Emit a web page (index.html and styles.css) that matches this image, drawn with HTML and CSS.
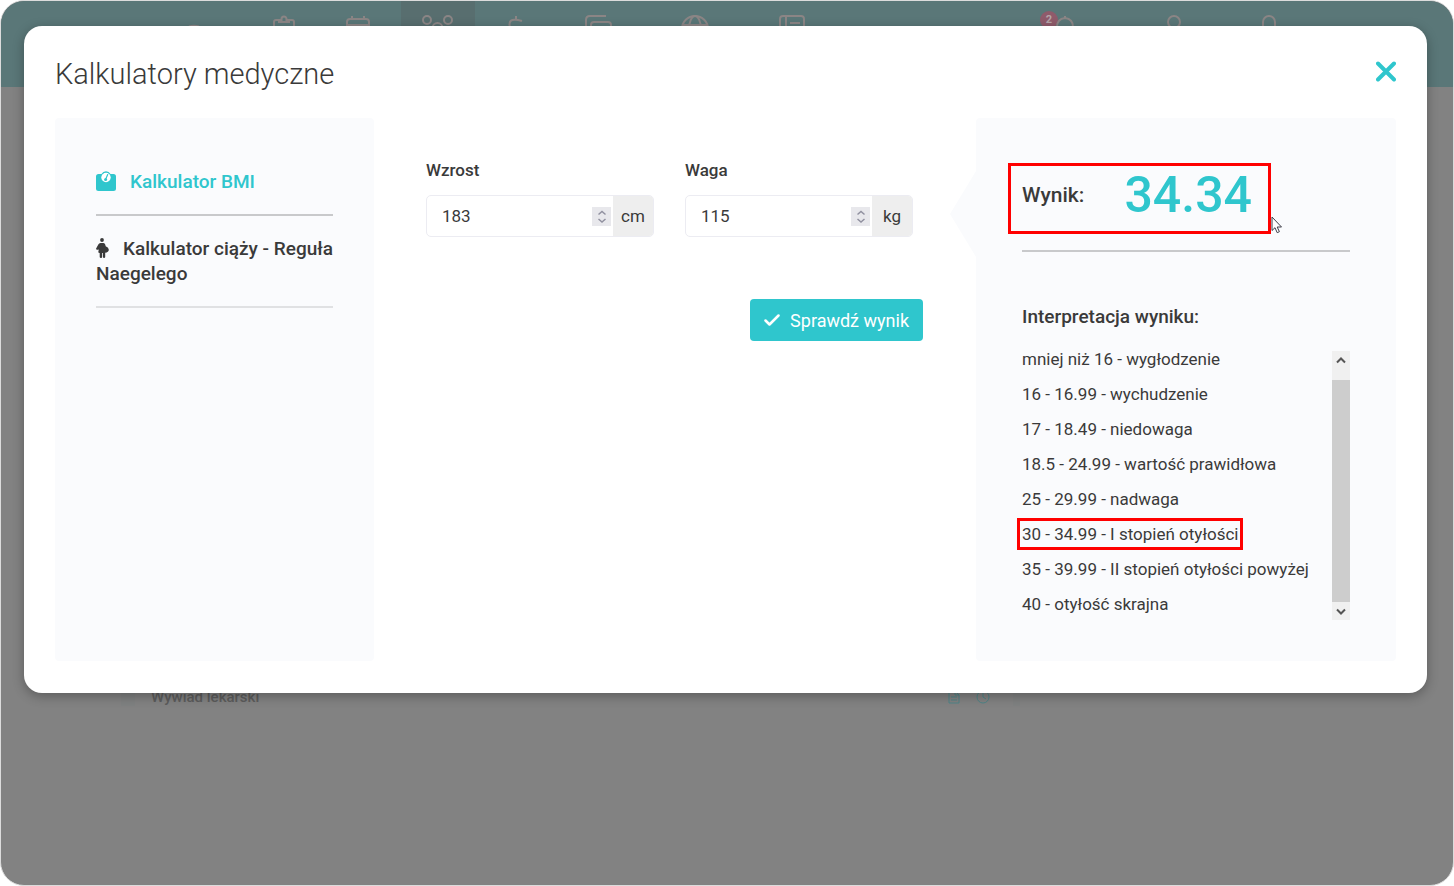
FILE: index.html
```html
<!DOCTYPE html>
<html lang="pl">
<head>
<meta charset="utf-8">
<title>Kalkulatory medyczne</title>
<link rel="stylesheet" href="styles.css">
</head>
<body>
<div class="stage">
  <div class="app">
    <header class="topbar">
      <nav class="topnav" aria-label="Menu główne">
        <a class="tab tab-home" href="#" aria-label="Start"><svg width="26" height="26" viewBox="0 0 26 26"><path d="M8 11.500Q13 10 18 11.500"/></svg></a>
        <a class="tab tab-s" href="#" aria-label="Karta"><svg width="26" height="26" viewBox="0 0 26 26"><path d="M7 5H5Q3 5 3 7v16h20V7q0-2-2-2h-2M8 7h10V5h-2.500V4a2.500 2.500 0 0 0-5 0v1H8z"/></svg></a>
        <a class="tab tab-s" href="#" aria-label="Kalendarz"><svg width="26" height="26" viewBox="0 0 26 26"><path d="M2 9V7q0-3 3-3h16q3 0 3 3v16H2zM2 10h22M7 1v3M19 1v3"/></svg></a>
        <a class="tab tab-s tab-active" href="#" aria-label="Pacjenci"><svg width="32" height="26" viewBox="0 0 32 26"><circle cx="5" cy="5" r="4"/><circle cx="26" cy="5" r="4"/><circle cx="15.500" cy="13" r="5"/></svg></a>
        <a class="tab tab-l" href="#" aria-label="Finanse"><svg width="26" height="26" viewBox="0 0 26 26"><path d="M13 1v4M19 6Q6 2 6.500 10q0 4 7 4"/></svg></a>
        <a class="tab tab-l" href="#" aria-label="Dokumenty"><svg width="28" height="26" viewBox="0 0 28 26"><path d="M2 20V5q0-4 4-4h16M7 22V10q0-3 3-3h14q3 0 3 3v12zM13 12h6"/></svg></a>
        <a class="tab tab-xl" href="#" aria-label="Portal"><svg width="28" height="28" viewBox="0 0 28 28"><circle cx="14" cy="14" r="13"/><ellipse cx="14" cy="14" rx="6" ry="13"/><path d="M2 10h24"/></svg></a>
        <a class="tab tab-l" href="#" aria-label="Raporty"><svg width="26" height="26" viewBox="0 0 26 26"><path d="M1 24V4q0-3 3-3h18q3 0 3 3v20zM7 1v23M11 8h10"/></svg></a>
      </nav>
      <nav class="topnav topnav-user" aria-label="Konto">
        <a class="tab tab-bell" href="#" aria-label="Powiadomienia"><svg width="26" height="26" viewBox="0 0 26 26"><path d="M5 20v-8q0-8 8-9 8 1 8 9v8M13 1v2"/></svg><span class="badge">2</span></a>
        <a class="tab tab-m" href="#" aria-label="Profil"><svg width="26" height="26" viewBox="0 0 26 26"><circle cx="13" cy="7" r="6"/></svg></a>
        <a class="tab tab-m" href="#" aria-label="Wyloguj"><svg width="26" height="26" viewBox="0 0 26 26"><path d="M7 11V7a6 6 0 0 1 12 0v4M4 12h18"/></svg></a>
      </nav>
    </header>
    <main class="record">
      <div class="record-row">
        <span class="record-name">Wywiad lekarski</span>
        <span class="record-tools">
          <svg width="12" height="14" viewBox="0 0 12 14"><path d="M1 1h6l4 4v8H1zM7 1v4h4M3 7h6M3 10h6"/></svg>
          <svg width="14" height="14" viewBox="0 0 14 14"><circle cx="7" cy="7" r="6"/><path d="M7 3v4l3 2"/></svg>
        </span>
      </div>
    </main>
  </div>

  <div class="overlay">
    <section class="dialog" role="dialog" aria-labelledby="dialog-title">
      <div class="dialog-head">
        <h1 id="dialog-title">Kalkulatory medyczne</h1>
        <button class="close" type="button" aria-label="Zamknij"><svg width="20" height="21" viewBox="0 0 20 21"><path d="M2 2.500l16 16M18 2.500l-16 16"/></svg></button>
      </div>
      <div class="columns">
        <nav class="calculators" aria-label="Kalkulatory">
          <a class="calc calc-active" href="#"><svg width="20" height="20" viewBox="0 0 20 20"><path fill="currentColor" d="M2.500 3h3a5 5 0 0 1 9 0h3Q20 3 20 5.500v12q0 2.500-2.500 2.500h-15Q0 20 0 17.500v-12Q0 3 2.500 3z"/><circle cx="10" cy="6.500" r="4.700" fill="#fff"/><path d="M9.600 8.500L11.700 3.500" stroke="currentColor" stroke-width="1.200" stroke-linecap="round"/><circle cx="9.600" cy="8.500" r="1.500" fill="currentColor"/></svg>Kalkulator BMI</a>
          <a class="calc" href="#"><svg width="13" height="20" viewBox="0 0 13 20"><g fill="currentColor"><circle cx="6" cy="2" r="1.900"/><path d="M4.500 5h3q1.400 0 1.700 1.500l.5 1.800Q13 9.500 12.800 12q-.2 2.300-3.600 2.800V19q0 1-1.200 1-1 0-1-1v-4h-.8v4q0 1-1.200 1-1.300 0-1.300-1v-4Q2.300 15 2.300 14l.5-2.400Q0 12.300 0 10.800L2.300 6.500Q3 5 4.500 5z"/></g></svg>Kalkulator ciąży - Reguła Naegelego</a>
        </nav>

        <form class="form">
          <div class="fields">
            <div class="field">
              <label for="height">Wzrost</label>
              <div class="control">
                <input id="height" type="number" value="183">
                <span class="spin"><svg width="10" height="13" viewBox="0 0 10 13"><path d="M1.500 4.500L5 1.500l3.500 3M1.500 9L5 12l3.500-3"/></svg></span>
                <span class="unit">cm</span>
              </div>
            </div>
            <div class="field">
              <label for="weight">Waga</label>
              <div class="control">
                <input id="weight" type="number" value="115">
                <span class="spin"><svg width="10" height="13" viewBox="0 0 10 13"><path d="M1.500 4.500L5 1.500l3.500 3M1.500 9L5 12l3.500-3"/></svg></span>
                <span class="unit">kg</span>
              </div>
            </div>
          </div>
          <button class="submit" type="button"><svg width="16" height="12" viewBox="0 0 16 12"><path d="M1.500 6.500L5.500 10.500 14.500 1.500"/></svg>Sprawdź wynik</button>
        </form>

        <section class="result">
          <div class="score">
            <span class="score-label">Wynik:</span>
            <strong class="score-value">34.34</strong>
            <svg class="pointer" width="12" height="18" viewBox="0 0 12 18"><path d="M1 1v13.500l3-2.800 2.200 5 2.200-1-2.200-4.700H10.500z"/></svg>
          </div>
          <hr class="rule">
          <h2>Interpretacja wyniku:</h2>
          <div class="scroller">
            <ul class="ranges">
              <li>mniej niż 16 - wygłodzenie</li>
              <li>16 - 16.99 - wychudzenie</li>
              <li>17 - 18.49 - niedowaga</li>
              <li>18.5 - 24.99 - wartość prawidłowa</li>
              <li>25 - 29.99 - nadwaga</li>
              <li><span class="match">30 - 34.99 - I stopień otyłości</span></li>
              <li>35 - 39.99 - II stopień otyłości powyżej</li>
              <li>40 - otyłość skrajna</li>
            </ul>
            <div class="bar">
              <button type="button" aria-label="Przewiń w górę"><svg width="10" height="7" viewBox="0 0 10 7"><path d="M1 5.500l4-4 4 4"/></svg></button>
              <span class="thumb"></span>
              <button type="button" aria-label="Przewiń w dół"><svg width="10" height="7" viewBox="0 0 10 7"><path d="M1 1.500l4 4 4-4"/></svg></button>
            </div>
          </div>
        </section>
      </div>
    </section>
  </div>
</div>
</body>
</html>
```
FILE: styles.css
```css
* { box-sizing: border-box; }

body {
  margin: 0;
  background: #fff;
  color: #3a3a3a;
  font-family: Roboto, "Open Sans", sans-serif;
  font-size: 17px;
}

a { color: inherit; text-decoration: none; }
button, input { font: inherit; color: inherit; }
svg { fill: none; flex: none; }

/* The dialog layer and the page share one grid cell. */
.stage { display: grid; min-height: 100vh; }
.app, .overlay { grid-area: 1 / 1; }

.app {
  border: 1px solid #dcdcdc;
  border-radius: 24px;
  background: #828282;
  overflow: hidden;
}

.topbar {
  display: flex;
  justify-content: space-between;
  height: 86px;
  background: #5a7778;
}
.topnav { display: flex; padding-left: 140px; }
.topnav-user { padding: 0 137px 0 0; }
.tab {
  display: flex;
  justify-content: center;
  padding-top: 14px;
  width: 82px;
}
.tab-home { width: 106px; }
.tab-s { width: 74px; }
.tab-m { width: 95px; }
.tab-xl { width: 112px; }
.tab-bell { width: 124px; }
.tab-active { margin-left: 6px; background: #586e6f; }
.tab svg { stroke: #8b8585; stroke-width: 2; }
.badge {
  order: -1;
  width: 18px;
  height: 18px;
  margin: -4px -6px 0 -10px;
  border-radius: 50%;
  background: #8f5b6b;
  color: #b5a5a9;
  font-size: 11px;
  font-weight: 700;
  line-height: 18px;
  text-align: center;
}

.record { padding: 601px 433px 0 120px; }
.record-row {
  display: flex;
  align-items: center;
  justify-content: space-between;
  height: 18px;
  padding: 0 23px 0 16px;
  border: solid #7f8181;
  border-width: 0 7px 0 14px;
}
.record-name { color: #5c5c5c; font-size: 15px; font-weight: 500; }
.record-tools { display: flex; gap: 16px; }
.record-tools svg { stroke: #4f8487; stroke-width: 1; }

.overlay { padding: 26px 27px 24px 24px; }
.dialog {
  padding: 28px 31px 32px;
  border-radius: 18px;
  background: #fff;
  box-shadow: 0 3px 12px rgba(0, 0, 0, .3);
}
.dialog-head {
  display: flex;
  justify-content: space-between;
  align-items: flex-start;
  margin-bottom: 24px;
}
h1 {
  margin: 0;
  font-size: 29px;
  font-weight: 300;
  line-height: 40px;
}
.close {
  display: flex;
  margin: 7px 0 0;
  padding: 0;
  border: 0;
  background: none;
}
.close svg { stroke: #2fc6cd; stroke-width: 4; stroke-linecap: round; }

.columns {
  display: grid;
  grid-template-columns: minmax(0, 319fr) minmax(0, 602fr) minmax(0, 420fr);
}

.calculators {
  padding: 31px 41px;
  border-radius: 4px;
  background: #fafbfd;
}
.calc {
  display: block;
  padding: 20px 0;
  border-bottom: 2px solid #e0e1e3;
  font-size: 19px;
  font-weight: 500;
  line-height: 25px;
}
.calc-active { border-color: #c8c9cb; color: #2fc6cd; }
.calc svg { margin-right: 14px; vertical-align: -3px; }

.form {
  display: flex;
  flex-direction: column;
  padding: 40px 53px 0 52px;
}
.fields {
  display: grid;
  grid-template-columns: repeat(2, minmax(0, 1fr));
  gap: 31px;
  padding-right: 10px;
}
.field label {
  display: block;
  margin-bottom: 13px;
  font-weight: 500;
  line-height: 24px;
}
.control {
  display: flex;
  align-items: center;
  height: 42px;
  border: 1px solid #ececf2;
  border-radius: 5px;
  overflow: hidden;
}
.control input {
  flex: 1;
  min-width: 0;
  height: 40px;
  padding: 0 0 0 15px;
  border: 0;
  background: none;
  outline: 0;
  appearance: textfield;
}
.control input::-webkit-inner-spin-button { appearance: none; }
.spin {
  display: flex;
  align-items: center;
  justify-content: center;
  width: 19px;
  height: 19px;
  margin: 1px 2px 0 0;
  background: #e8e8ec;
}
.spin svg { stroke: #9191a0; stroke-width: 1.500; }
.unit {
  width: 40px;
  background: #eee;
  line-height: 42px;
  text-align: center;
}

.submit {
  display: flex;
  align-items: center;
  align-self: flex-end;
  gap: 10px;
  height: 42px;
  margin-top: 62px;
  padding: 0 14px;
  border: 0;
  border-radius: 4px;
  background: #2fc6cd;
  color: #fff;
  font-size: 18px;
}
.submit svg { stroke: #fff; stroke-width: 2.500; stroke-linecap: round; stroke-linejoin: round; }

.result {
  position: relative;
  padding: 45px 46px 41px;
  border-radius: 4px;
  background: #fafbfd;
}
.result::before {
  content: "";
  position: absolute;
  top: 53px;
  right: 100%;
  width: 26px;
  height: 86px;
  background: #fafbfd;
  clip-path: polygon(100% 0, 100% 100%, 0 50%);
}
.score {
  position: relative;
  display: flex;
  align-items: center;
  justify-content: space-between;
  width: 263px;
  margin-left: -14px;
  padding: 0 16px 7px 11px;
  border: 3px solid #f00;
}
.score-label { font-size: 21px; font-weight: 500; }
.score-value {
  color: #2fc6cd;
  font-size: 50px;
  font-weight: 500;
  line-height: 58px;
}
.pointer { position: absolute; left: 260px; top: 50px; }
.pointer path { fill: #fff; stroke: #3f3f4a; stroke-width: 1; }
.rule {
  height: 2px;
  margin: 16px 0 52px;
  border: 0;
  background: #c8c9cb;
}
h2 {
  margin: 0 0 22px;
  font-size: 19px;
  font-weight: 500;
  line-height: 25px;
}
.scroller { display: flex; justify-content: space-between; height: 269px; }
.ranges {
  margin: -9px 0 0;
  padding: 0;
  list-style: none;
  line-height: 35px;
  white-space: nowrap;
}
.match {
  margin-left: -5px;
  padding: 3px 2px;
  border: 3px solid #f00;
}
.bar {
  display: flex;
  flex-direction: column;
  width: 18px;
  background: #f0f0f0;
}
.bar button {
  display: flex;
  align-items: center;
  justify-content: center;
  height: 18px;
  padding: 0;
  border: 0;
  background: none;
}
.bar svg { stroke: #555; stroke-width: 2; }
.thumb { flex: 1; margin-top: 11px; background: #cdcdcd; }
```
